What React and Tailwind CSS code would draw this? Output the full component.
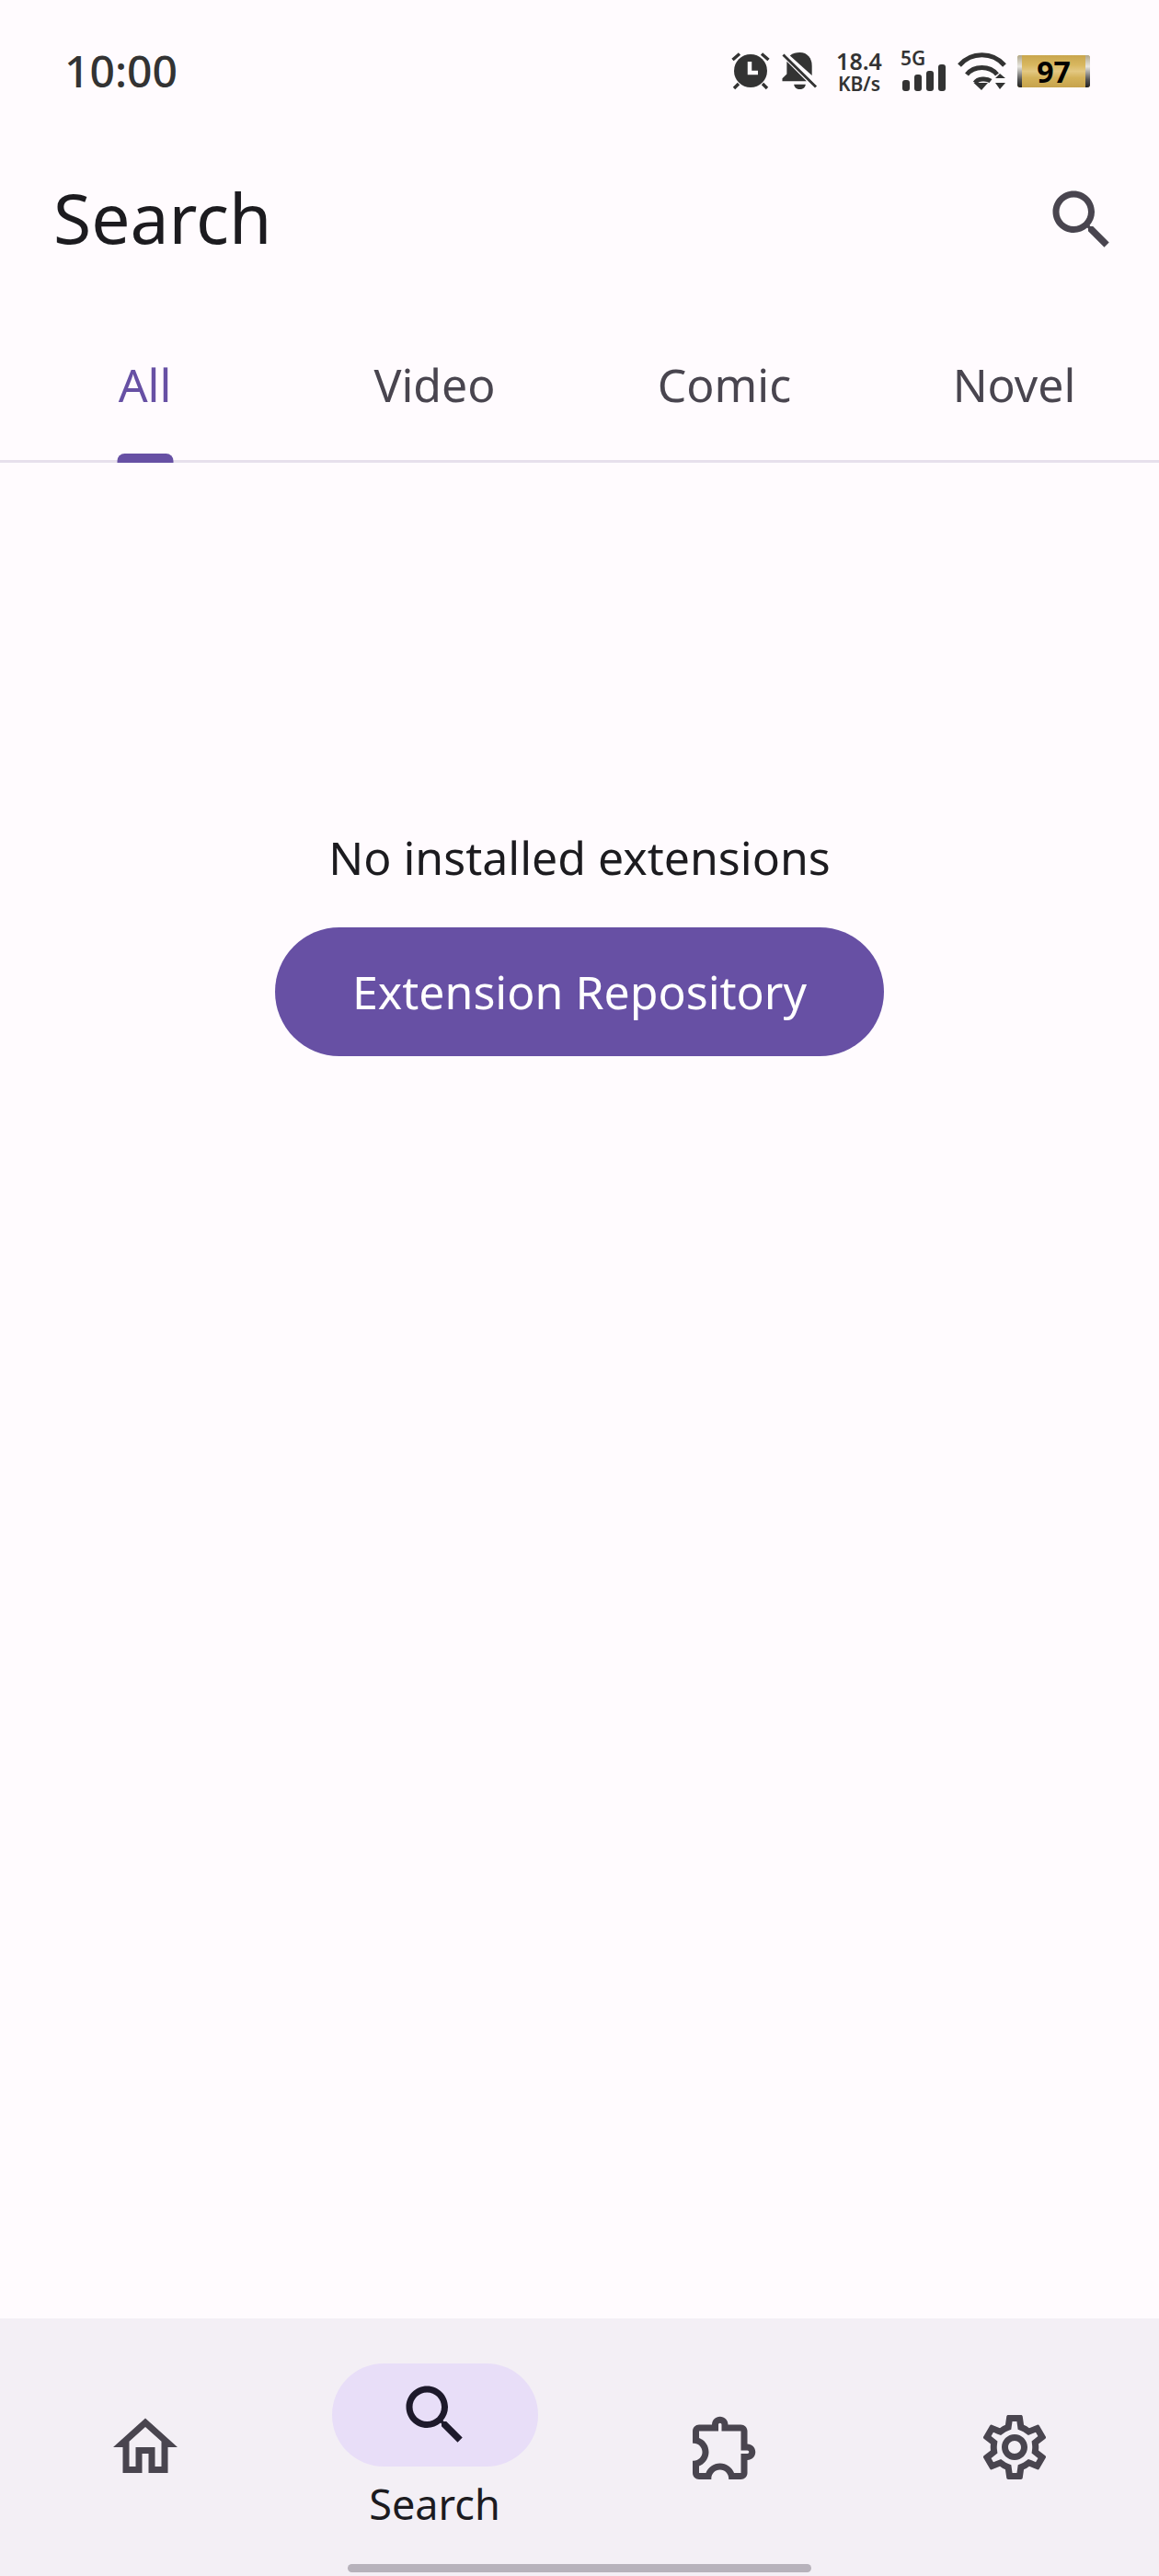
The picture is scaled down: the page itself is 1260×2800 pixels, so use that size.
import React from 'react';

const PATHS = {
  search: 'M15.5 14h-.79l-.28-.27C15.41 12.59 16 11.11 16 9.5 16 5.91 13.09 3 9.5 3S3 5.91 3 9.5 5.91 16 9.5 16c1.61 0 3.09-.59 4.23-1.57l.27.28v.79l5 4.99L20.49 19l-4.99-5zm-6 0C7.01 14 5 11.99 5 9.5S7.01 5 9.5 5 14 7.01 14 9.5 11.99 14 9.5 14z',
  home: 'M12 5.69l5 4.5V18h-2v-6H9v6H7v-7.81l5-4.5M12 3L2 12h3v8h6v-6h2v6h6v-8h3L12 3z',
  extension: 'M10.5 4.5c.28 0 .5.22.5.5v2h6v6h2c.28 0 .5.22.5.5s-.22.5-.5.5h-2v6h-2.12c-.68-1.75-2.39-3-4.38-3s-3.7 1.25-4.38 3H4v-2.12c1.75-.68 3-2.39 3-4.38 0-1.99-1.24-3.7-2.99-4.38L4 7h6V5c0-.28.22-.5.5-.5m0-2C9.12 2.5 8 3.62 8 5H4c-1.1 0-1.99.9-1.99 2v3.8h.29c1.49 0 2.7 1.21 2.7 2.7s-1.21 2.7-2.7 2.7H2V20c0 1.1.9 2 2 2h3.8v-.3c0-1.49 1.21-2.7 2.7-2.7s2.7 1.21 2.7 2.7v.3H17c1.1 0 2-.9 2-2v-4c1.38 0 2.5-1.12 2.5-2.5S20.38 11 19 11V7c0-1.1-.9-2-2-2h-4c0-1.38-1.12-2.5-2.5-2.5z',
  settings: 'M19.43 12.98c.04-.32.07-.64.07-.98 0-.34-.03-.66-.07-.98l2.11-1.65c.19-.15.24-.42.12-.64l-2-3.46c-.09-.16-.26-.25-.44-.25-.06 0-.12.01-.17.03l-2.49 1c-.52-.4-1.08-.73-1.69-.98l-.38-2.65C14.46 2.18 14.25 2 14 2h-4c-.25 0-.46.18-.49.42l-.38 2.65c-.61.25-1.17.59-1.69.98l-2.49-1c-.06-.02-.12-.03-.18-.03-.17 0-.34.09-.43.25l-2 3.46c-.13.22-.07.49.12.64l2.11 1.65c-.04.32-.07.65-.07.98 0 .33.03.66.07.98l-2.11 1.65c-.19.15-.24.42-.12.64l2 3.46c.09.16.26.25.44.25.06 0 .12-.01.17-.03l2.49-1c.52.4 1.08.73 1.69.98l.38 2.65c.03.24.24.42.49.42h4c.25 0 .46-.18.49-.42l.38-2.65c.61-.25 1.17-.59 1.69-.98l2.49 1c.06.02.12.03.18.03.17 0 .34-.09.43-.25l2-3.46c.12-.22.07-.49-.12-.64l-2.11-1.65zm-1.98-1.71c.04.31.05.52.05.73 0 .21-.02.43-.05.73l-.14 1.13.89.7 1.08.84-.7 1.21-1.27-.51-1.04-.42-.9.68c-.43.32-.84.56-1.25.73l-1.06.43-.16 1.13-.2 1.35h-1.4l-.19-1.35-.16-1.13-1.06-.43c-.43-.18-.83-.41-1.23-.71l-.91-.7-1.06.43-1.27.51-.7-1.21 1.08-.84.89-.7-.14-1.13c-.03-.31-.05-.54-.05-.74s.02-.43.05-.73l.14-1.13-.89-.7-1.08-.84.7-1.21 1.27.51 1.04.42.9-.68c.43-.32.84-.56 1.25-.73l1.06-.43.16-1.13.2-1.35h1.39l.19 1.35.16 1.13 1.06.43c.43.18.83.41 1.23.71l.91.7 1.06-.43 1.27-.51.7 1.21-1.07.85-.89.7.14 1.13zM12 8c-2.21 0-4 1.79-4 4s1.79 4 4 4 4-1.79 4-4-1.79-4-4-4zm0 6c-1.1 0-2-.9-2-2s.9-2 2-2 2 .9 2 2-.9 2-2 2z',
};

const TABS = ['All', 'Video', 'Comic', 'Novel'];

function Icon({ name, className }) {
  return (
    <svg viewBox="0 0 24 24" fill="currentColor" className={className}>
      <path d={PATHS[name]} />
    </svg>
  );
}

function AlarmIcon() {
  return (
    <svg viewBox="0 0 42 42" className="w-[42px] h-[42px]" fill="none" stroke="#333333" strokeWidth="3.4">
      <circle cx="21" cy="21" r="18" fill="#333333" stroke="none" />
      <path d="M1.5 9 L9 2.5 M40.5 9 L33 2.5 M3 40 L8 35 M39 40 L34 35" />
      <path d="M20 11 V23 H29" stroke="#fffbfe" strokeWidth="4.5" />
    </svg>
  );
}

function BellOffIcon() {
  return (
    <svg viewBox="0 0 40 42" className="w-[39px] h-[42px]">
      <path d="M20 0.5c8.5 0 13.5 6.5 13.5 14.5v11L9 4C12 1.500 16 0.5 20 0.5z" fill="#333333" />
      <path d="M5.500 10.500L27.500 32.500H0.500v-3l5-5z" fill="#333333" />
      <path d="M13.500 36h13c-.5 3.500-3 5.500-6.500 5.500s-6-2-6.500-5.500z" fill="#333333" />
      <path d="M1.500 3L38 39" stroke="#333333" strokeWidth="3" fill="none" />
      <path d="M5 2.500L39 36" stroke="#fffbfe" strokeWidth="2" fill="none" />
    </svg>
  );
}

function SignalIcon() {
  return (
    <div className="flex items-end gap-[5px] h-[29px] pl-[2px]">
      <div className="w-[8px] h-[12px] rounded-[3px] bg-[#333333]" />
      <div className="w-[8px] h-[18px] rounded-[3px] bg-[#333333]" />
      <div className="w-[8px] h-[22px] rounded-[3px] bg-[#333333]" />
      <div className="w-[8px] h-[29px] rounded-[3px] bg-[#333333]" />
    </div>
  );
}

function WifiIcon() {
  return (
    <svg viewBox="0 0 54 42" className="w-[54px] h-[42px]" fill="none" stroke="#333333" strokeWidth="5">
      <path d="M2 15 C15 0 38 0 51 15" />
      <path d="M10 25 C18 15 35 15 43 25" />
      <path d="M19 34 C22 29 32 29 36 32" />
      <path d="M17.500 34 H33 L26 42 Z" fill="#333333" stroke="none" />
      <path d="M41 29 L46 24 L52 29 Z M41 34 H52 L46 41 Z" fill="#333333" stroke="none" />
    </svg>
  );
}

function Battery() {
  return (
    <div className="relative w-[79px] h-[35px] rounded-[3px] flex items-center justify-center bg-[linear-gradient(180deg,#c9a64e_0%,#d8b75f_30%,#e3c882_50%,#d4b25a_70%,#c6a34c_100%)]">
      <div className="absolute left-0 top-0 bottom-0 w-[5px] rounded-l-[3px] bg-[linear-gradient(180deg,#b0a68a_0%,#e8e6e0_35%,#555555_75%,#222222_100%)]" />
      <div className="absolute right-0 top-0 bottom-0 w-[5px] rounded-r-[3px] bg-[linear-gradient(180deg,#b0a68a_0%,#e8e6e0_35%,#555555_75%,#222222_100%)]" />
      <span className="relative text-[32px] leading-[35px] font-bold text-black">97</span>
    </div>
  );
}

export default function App() {
  return (
    <div className="w-[1260px] h-[2800px] flex flex-col bg-[#fffbfe] font-['Noto_Sans',sans-serif] overflow-hidden">
      {/* Status bar */}
      <div className="h-[154px] shrink-0 flex items-center justify-between pl-[70px] pr-[75px]">
        <span className="text-[48px] leading-none font-medium text-[#333333]">10:00</span>
        <div className="flex items-center">
          <AlarmIcon />
          <div className="ml-[13px]"><BellOffIcon /></div>
          <div className="ml-[18px] w-[54px] pt-[2px] flex flex-col items-center gap-[6px] text-[#333333] font-semibold">
            <span className="text-[25px] leading-[19px]">18.4</span>
            <span className="text-[21px] leading-[18px]">KB/s</span>
          </div>
          <div className="ml-[18px] w-[50px] flex flex-col text-[#333333]">
            <span className="text-[21px] leading-[14px] font-semibold">5G</span>
            <SignalIcon />
          </div>
          <div className="ml-[12px]"><WifiIcon /></div>
          <div className="ml-[11px]"><Battery /></div>
        </div>
      </div>

      {/* Title row */}
      <div className="h-[169px] shrink-0 flex items-center justify-between pl-[58px] pr-[42px]">
        <h1 className="text-[75px] leading-none font-normal text-[#1c1b1f] mb-[4px]">Search</h1>
        <Icon name="search" className="w-[84px] h-[84px] text-[#49454f]" />
      </div>

      {/* Tabs */}
      <div className="h-[180px] shrink-0 grid grid-cols-4 border-b-[3px] border-[#e7e0ec]">
        {TABS.map((t, i) => (
          <div key={t} className="relative flex items-center justify-center pt-[12px]">
            <span className={`text-[50px] leading-none ${i === 0 ? 'text-[#6750a4]' : 'text-[#49454f]'}`}>{t}</span>
            {i === 0 && (
              <div className="absolute -bottom-[3px] left-1/2 -translate-x-1/2 w-[61px] h-[10px] rounded-t-[8px] bg-[#6750a4]" />
            )}
          </div>
        ))}
      </div>

      {/* Empty state */}
      <div className="flex-1 flex flex-col items-center pt-[397px]">
        <p className="text-[50px] leading-[64px] text-[#1c1b1f]">No installed extensions</p>
        <button className="mt-[44px] w-[662px] h-[140px] rounded-full bg-[#6750a4] text-white text-[50px] leading-none">
          Extension Repository
        </button>
      </div>

      {/* Bottom nav */}
      <div className="relative h-[280px] shrink-0 bg-[#f3eff5] grid grid-cols-4">
        <div className="flex items-start justify-center pt-[98px]">
          <Icon name="home" className="w-[84px] h-[84px] text-[#49454f]" />
        </div>
        <div className="flex flex-col items-center pt-[49px]">
          <div className="w-[224px] h-[112px] rounded-full bg-[#e8def8] flex items-center justify-center">
            <Icon name="search" className="w-[84px] h-[84px] text-[#1d192b]" />
          </div>
          <span className="mt-[11px] text-[45px] leading-[60px] text-[#1c1b1f]">Search</span>
        </div>
        <div className="flex items-start justify-center pt-[98px]">
          <Icon name="extension" className="w-[84px] h-[84px] text-[#49454f]" />
        </div>
        <div className="flex items-start justify-center pt-[98px]">
          <Icon name="settings" className="w-[84px] h-[84px] text-[#49454f]" />
        </div>
        <div className="absolute left-1/2 -translate-x-1/2 bottom-[4px] w-[504px] h-[9px] rounded-full bg-[#b7b2bb]" />
      </div>
    </div>
  );
}
